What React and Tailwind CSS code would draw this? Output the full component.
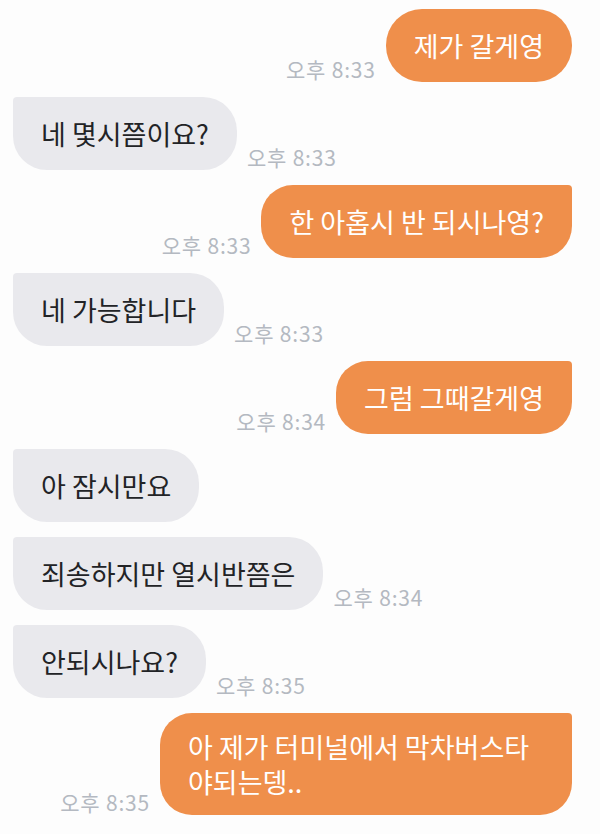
import React from "react";

const messages = [
  { from: "me", text: "제가 갈게영", time: "오후 8:33", first: true },
  { from: "them", text: "네 몇시쯤이요?", time: "오후 8:33" },
  { from: "me", text: "한 아홉시 반 되시나영?", time: "오후 8:33" },
  { from: "them", text: "네 가능합니다", time: "오후 8:33" },
  { from: "me", text: "그럼 그때갈게영", time: "오후 8:34" },
  { from: "them", text: "아 잠시만요" },
  { from: "them", text: "죄송하지만 열시반쯤은", time: "오후 8:34" },
  { from: "them", text: "안되시나요?", time: "오후 8:35" },
  { from: "me", text: "아 제가 터미널에서 막차버스타야되는뎅..", time: "오후 8:35" },
];

const Time = ({ children }) => (
  <span className="mb-[1px] shrink-0 whitespace-nowrap text-[21px] leading-[24px] tracking-[0.8px] text-[#b4b9c1]">
    {children}
  </span>
);

const Bubble = ({ msg }) => {
  const mine = msg.from === "me";
  const shape = mine
    ? msg.first
      ? "rounded-[36px]"
      : "rounded-[32px] rounded-tr-[4px]"
    : "rounded-[34px] rounded-tl-[4px]";
  const colors = mine ? "bg-[#ef8f4b] text-white" : "bg-[#e9e9ed] text-[#222326]";

  return (
    <div
      className={`flex min-h-[73px] max-w-[412px] items-center px-[28px] py-[16px] text-[27px] leading-[35px] ${shape} ${colors}`}
    >
      {msg.text}
    </div>
  );
};

export default function App() {
  return (
    <div className="min-h-[834px] bg-[#fdfdfd] pt-[9px] pl-[13px] pr-[28px] font-['Noto_Sans_CJK_KR','Noto_Sans',sans-serif]">
      <div className="flex flex-col gap-[15px]">
        {messages.map((msg, i) =>
          msg.from === "me" ? (
            <div key={i} className="flex items-end justify-end gap-[10px]">
              {msg.time && <Time>{msg.time}</Time>}
              <Bubble msg={msg} />
            </div>
          ) : (
            <div key={i} className="flex items-end gap-[10px]">
              <Bubble msg={msg} />
              {msg.time && <Time>{msg.time}</Time>}
            </div>
          )
        )}
      </div>
    </div>
  );
}
